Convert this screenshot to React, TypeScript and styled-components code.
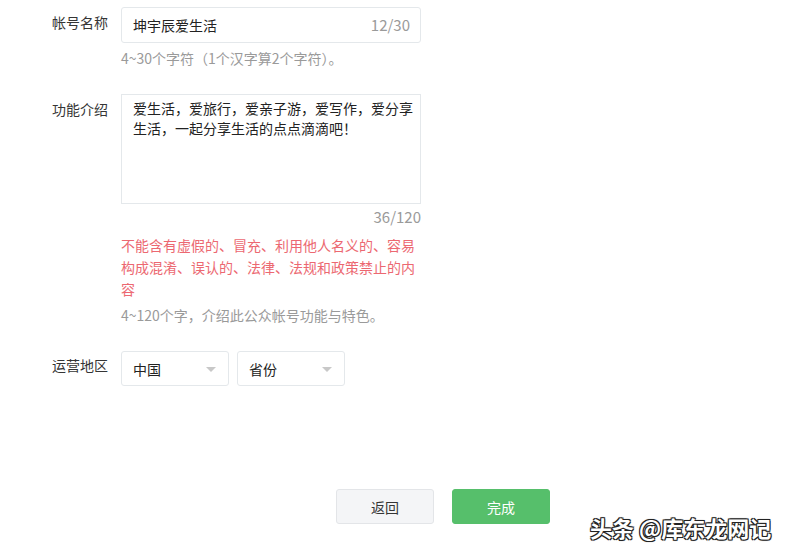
import styled, { createGlobalStyle } from 'styled-components';

const GlobalStyle = createGlobalStyle`
  body {
    margin: 0;
    background: #ffffff;
    font-family: "Microsoft YaHei", "Noto Sans CJK SC", "Noto Sans", sans-serif;
    color: #353535;
  }
`;

const Page = styled.div`
  position: relative;
  width: 788px;
  height: 554px;
  overflow: hidden;
  padding: 7px 0 0 52px;
  box-sizing: border-box;
`;

const FormRow = styled.div`
  display: flex;
  align-items: flex-start;
  margin-bottom: 26px;
`;

const Label = styled.div<{ offset?: number }>`
  width: 69px;
  flex-shrink: 0;
  font-size: 14px;
  line-height: 20px;
  margin-top: ${({ offset }) => offset ?? 5}px;
  color: #353535;
`;

const Field = styled.div`
  width: 300px;
  display: flex;
  flex-direction: column;
`;

const InputBox = styled.div`
  height: 36px;
  box-sizing: border-box;
  border: 1px solid #e4e8eb;
  border-radius: 3px;
  padding: 0 10px 0 11px;
  display: flex;
  align-items: center;
  justify-content: space-between;
  font-size: 14px;
  line-height: 34px;
  color: #222;
`;

const Counter = styled.span`
  color: #9a9a9a;
  font-size: 15px;
`;

const TextArea = styled.div`
  height: 110px;
  box-sizing: border-box;
  border: 1px solid #e4e8eb;
  padding: 3px 6px 0 11px;
  font-size: 14px;
  line-height: 20px;
  color: #222;
`;

const AreaCounter = styled.div`
  text-align: right;
  font-size: 15px;
  line-height: 20px;
  color: #9a9a9a;
  margin-top: 3px;
`;

const Warning = styled.div`
  font-size: 14px;
  line-height: 22px;
  color: #ec6871;
  margin-top: 7px;
`;

const Hint = styled.div<{ gap?: number }>`
  font-size: 14px;
  line-height: 20px;
  color: #9a9a9a;
  margin-top: ${({ gap }) => gap ?? 5}px;
`;

const Selects = styled.div`
  display: flex;
  gap: 8px;
`;

const Select = styled.div`
  width: 108px;
  height: 35px;
  box-sizing: border-box;
  border: 1px solid #e4e8eb;
  border-radius: 3px;
  padding: 1px 12px 0 11px;
  display: flex;
  align-items: center;
  justify-content: space-between;
  font-size: 14px;
  color: #222;
`;

const Arrow = styled.span`
  width: 0;
  height: 0;
  border-left: 5px solid transparent;
  border-right: 5px solid transparent;
  border-top: 5px solid #c8c8c8;
`;

const Buttons = styled.div`
  display: flex;
  gap: 18px;
  margin: 103px 0 0 284px;
`;

const Button = styled.button<{ primary?: boolean }>`
  width: 98px;
  height: 35px;
  box-sizing: border-box;
  border-radius: 3px;
  font-family: inherit;
  font-size: 14px;
  cursor: pointer;
  border: 1px solid ${({ primary }) => (primary ? '#56bf6b' : '#e3e5e8')};
  background: ${({ primary }) => (primary ? '#56bf6b' : '#f4f5f7')};
  color: ${({ primary }) => (primary ? '#ffffff' : '#353535')};
`;

const Watermark = styled.div`
  position: absolute;
  left: 590px;
  top: 513px;
  font-size: 22px;
  line-height: 28px;
  font-weight: bold;
  color: #ffffff;
  text-shadow:
    -1px -1px 0 #222,
    1px -1px 0 #222,
    -1px 1px 0 #222,
    1px 1px 0 #222,
    0 0 2px #000;
`;

const App = () => {
  return (
    <>
      <GlobalStyle />
      <Page>
        <FormRow>
          <Label>帐号名称</Label>
          <Field>
            <InputBox>
              <span>坤宇辰爱生活</span>
              <Counter>12/30</Counter>
            </InputBox>
            <Hint>4~30个字符（1个汉字算2个字符）。</Hint>
          </Field>
        </FormRow>
        <FormRow>
          <Label>功能介绍</Label>
          <Field>
            <TextArea>爱生活，爱旅行，爱亲子游，爱写作，爱分享生活，一起分享生活的点点滴滴吧！</TextArea>
            <AreaCounter>36/120</AreaCounter>
            <Warning>不能含有虚假的、冒充、利用他人名义的、容易构成混淆、误认的、法律、法规和政策禁止的内容</Warning>
            <Hint>4~120个字，介绍此公众帐号功能与特色。</Hint>
          </Field>
        </FormRow>
        <FormRow>
          <Label offset={4}>运营地区</Label>
          <Selects>
            <Select>
              <span>中国</span>
              <Arrow />
            </Select>
            <Select>
              <span>省份</span>
              <Arrow />
            </Select>
          </Selects>
        </FormRow>
        <Buttons>
          <Button>返回</Button>
          <Button primary>完成</Button>
        </Buttons>
        <Watermark>头条 @库东龙网记</Watermark>
      </Page>
    </>
  );
};

export default App;
